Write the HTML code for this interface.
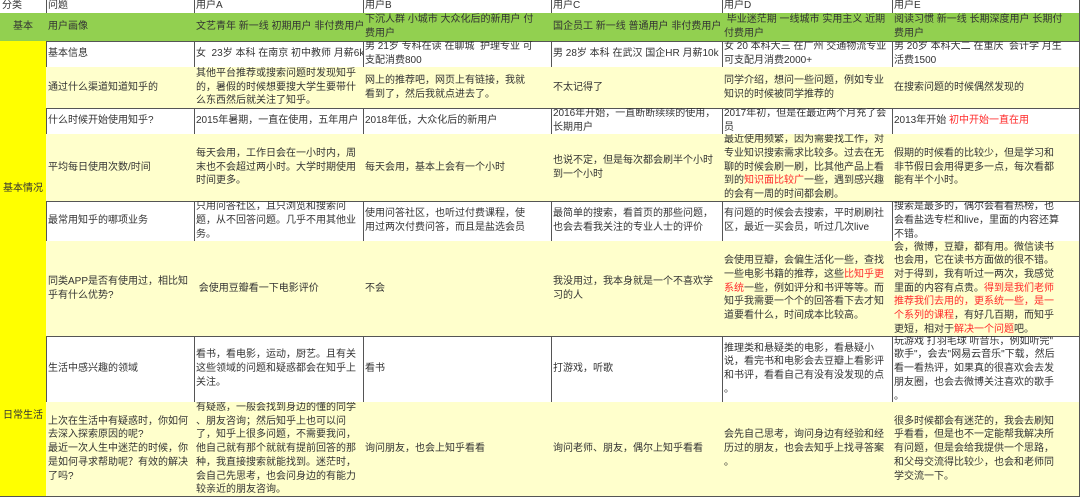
<!DOCTYPE html>
<html><head><meta charset="utf-8"><style>
*{box-sizing:border-box;margin:0;padding:0}
body{width:1080px;height:495px;overflow:hidden;background:#fff;position:relative;font-family:"Liberation Sans","Noto Sans CJK SC",sans-serif;font-size:10px;line-height:13.7px;color:#333}
.c{position:absolute;overflow:hidden;border-right:1px solid #555;border-bottom:1px solid #555;display:flex;align-items:center;padding-left:2px;white-space:nowrap}
.c>div{width:100%}
.h{align-items:flex-start;line-height:12px}
.y{background:#ffffcc}.g{background:#92d050}.Y{background:#ffff00}
.ctr{justify-content:center;text-align:center;padding:0}
.r{color:#ff2a2a}
.c0{left:0;width:47px}.c1{left:46px;width:149px}.cA{left:194px;width:170px}.cB{left:363px;width:189px}.cC{left:551px;width:172px}.cD{left:722px;width:171px}.cE{left:892px;width:188px}
.r0{top:0;height:14px}.r1{top:13px;height:29px}.r2{top:41px;height:27px}.r3{top:67px;height:42px}.r4{top:108px;height:27px}.r5{top:134px;height:68px}.r6{top:201px;height:41px}.r7{top:241px;height:96px}.r8{top:336px;height:67px}.r9{top:402px;height:95px}
</style></head><body>
<div class="c h c0 r0"><div>分类</div></div>
<div class="c h c1 r0"><div>问题</div></div>
<div class="c h cA r0"><div>用户A</div></div>
<div class="c h cB r0"><div>用户B</div></div>
<div class="c h cC r0"><div>用户C</div></div>
<div class="c h cD r0"><div>用户D</div></div>
<div class="c h cE r0"><div>用户E</div></div>

<div class="c g ctr c0 r1"><div>基本</div></div>
<div class="c g c1 r1"><div>用户画像</div></div>
<div class="c g cA r1"><div>文艺青年 新一线 初期用户 非付费用户</div></div>
<div class="c g cB r1"><div>下沉人群 小城市 大众化后的新用户 付<br>费用户</div></div>
<div class="c g cC r1"><div>国企员工 新一线 普通用户 非付费用户</div></div>
<div class="c g cD r1"><div>&nbsp;毕业迷茫期 一线城市 实用主义 近期<br>付费用户</div></div>
<div class="c g cE r1"><div>阅读习惯 新一线 长期深度用户 长期付<br>费用户</div></div>

<div class="c Y ctr c0" style="top:41px;height:296px"><div>基本情况</div></div>
<div class="c Y ctr c0" style="top:336px;height:161px"><div>日常生活</div></div>

<div class="c c1 r2"><div>基本信息</div></div>
<div class="c cA r2"><div>女&nbsp; 23岁 本科 在南京 初中教师 月薪6k</div></div>
<div class="c cB r2"><div>男 21岁 专科在读 在聊城&nbsp; 护理专业 可<br>支配消费800</div></div>
<div class="c cC r2"><div>男 28岁 本科 在武汉 国企HR 月薪10k</div></div>
<div class="c cD r2"><div>女 20 本科大三 在广州 交通物流专业<br>可支配月消费2000+</div></div>
<div class="c cE r2"><div>男 20岁 本科大二 在重庆&nbsp; 会计学 月生<br>活费1500</div></div>

<div class="c y c1 r3"><div>通过什么渠道知道知乎的</div></div>
<div class="c y cA r3"><div>其他平台推荐或搜索问题时发现知乎<br>的，暑假的时候想要搜大学生要带什<br>么东西然后就关注了知乎。</div></div>
<div class="c y cB r3"><div>网上的推荐吧，网页上有链接，我就<br>看到了，然后我就点进去了。</div></div>
<div class="c y cC r3"><div>不太记得了</div></div>
<div class="c y cD r3"><div>同学介绍，想问一些问题，例如专业<br>知识的时候被同学推荐的</div></div>
<div class="c y cE r3"><div>在搜索问题的时候偶然发现的</div></div>

<div class="c c1 r4"><div>什么时候开始使用知乎?</div></div>
<div class="c cA r4"><div>2015年暑期，一直在使用，五年用户</div></div>
<div class="c cB r4"><div>2018年低，大众化后的新用户</div></div>
<div class="c cC r4"><div>2016年开始，一直断断续续的使用，<br>长期用户</div></div>
<div class="c cD r4"><div>2017年初，但是在最近两个月充了会<br>员</div></div>
<div class="c cE r4"><div>2013年开始 <span class="r">初中开始一直在用</span></div></div>

<div class="c y c1 r5"><div>平均每日使用次数/时间</div></div>
<div class="c y cA r5"><div>每天会用，工作日会在一小时内，周<br>末也不会超过两小时。大学时期使用<br>时间更多。</div></div>
<div class="c y cB r5"><div>每天会用，基本上会有一个小时</div></div>
<div class="c y cC r5"><div>也说不定，但是每次都会刷半个小时<br>到一个小时</div></div>
<div class="c y cD r5"><div>最近使用频繁，因为需要找工作，对<br>专业知识搜索需求比较多。过去在无<br>聊的时候会刷一刷，比其他产品上看<br>到的<span class="r">知识面比较广</span>一些，遇到感兴趣<br>的会有一周的时间都会刷。</div></div>
<div class="c y cE r5"><div>假期的时候看的比较少，但是学习和<br>非节假日会用得更多一点，每次看都<br>能有半个小时。</div></div>

<div class="c c1 r6"><div>最常用知乎的哪项业务</div></div>
<div class="c cA r6"><div>只用问答社区，且只浏览和搜索问<br>题，从不回答问题。几乎不用其他业<br>务。</div></div>
<div class="c cB r6"><div>使用问答社区，也听过付费课程，使<br>用过两次付费问答，而且是盐选会员</div></div>
<div class="c cC r6"><div>最简单的搜索，看首页的那些问题，<br>也会去看我关注的专业人士的评价</div></div>
<div class="c cD r6"><div>有问题的时候会去搜索，平时刷刷社<br>区，最近一买会员，听过几次live</div></div>
<div class="c cE r6"><div>搜索是最多的，偶尔会看看热榜，也<br>会看盐选专栏和live，里面的内容还算<br>不错。</div></div>

<div class="c y c1 r7"><div>同类APP是否有使用过，相比知<br>乎有什么优势?</div></div>
<div class="c y cA r7"><div>&nbsp;会使用豆瓣看一下电影评价</div></div>
<div class="c y cB r7"><div>不会</div></div>
<div class="c y cC r7"><div>我没用过，我本身就是一个不喜欢学<br>习的人</div></div>
<div class="c y cD r7"><div>会使用豆瓣，会偏生活化一些，查找<br>一些电影书籍的推荐，这些<span class="r">比知乎更<br>系统</span>一些，例如评分和书评等等。而<br>知乎我需要一个个的回答看下去才知<br>道要看什么，时间成本比较高。</div></div>
<div class="c y cE r7"><div>会，微博，豆瓣，都有用。微信读书<br>也会用，它在读书方面做的很不错。<br>对于得到，我有听过一两次，我感觉<br>里面的内容有点贵。<span class="r">得到是我们老师<br>推荐我们去用的，更系统一些，是一<br>个系列的课程</span>，有好几百期，而知乎<br>更短，相对于<span class="r">解决一个问题</span>吧。</div></div>

<div class="c c1 r8"><div>生活中感兴趣的领域</div></div>
<div class="c cA r8"><div>看书，看电影，运动，厨艺。且有关<br>这些领域的问题和疑惑都会在知乎上<br>关注。</div></div>
<div class="c cB r8"><div>看书</div></div>
<div class="c cC r8"><div>打游戏，听歌</div></div>
<div class="c cD r8"><div>推理类和悬疑类的电影，看悬疑小<br>说，看完书和电影会去豆瓣上看影评<br>和书评，看看自己有没有没发现的点<br>。</div></div>
<div class="c cE r8"><div>玩游戏 打羽毛球 听音乐，例如听完"<br>歌手"，会去"网易云音乐"下载，然后<br>看一看热评，如果真的很喜欢会去发<br>朋友圈，也会去微博关注喜欢的歌手<br>。</div></div>

<div class="c y c1 r9"><div>上次在生活中有疑惑时，你如何<br>去深入探索原因的呢?<br>最近一次人生中迷茫的时候，你<br>是如何寻求帮助呢？有效的解决<br>了吗?</div></div>
<div class="c y cA r9"><div>有疑惑，一般会找到身边的懂的同学<br>、朋友咨询；然后知乎上也可以问<br>了，知乎上很多问题，不需要我问，<br>他自己就有那个就就有提前回答的那<br>种，我直接搜索就能找到。迷茫时，<br>会自己先思考，也会问身边的有能力<br>较亲近的朋友咨询。</div></div>
<div class="c y cB r9"><div>询问朋友，也会上知乎看看</div></div>
<div class="c y cC r9"><div>询问老师、朋友，偶尔上知乎看看</div></div>
<div class="c y cD r9"><div>会先自己思考，询问身边有经验和经<br>历过的朋友，也会去知乎上找寻答案<br>。</div></div>
<div class="c y cE r9"><div>很多时候都会有迷茫的，我会去刷知<br>乎看看，但是也不一定能帮我解决所<br>有问题，但是会给我提供一个思路，<br>和父母交流得比较少，也会和老师同<br>学交流一下。</div></div>
</body></html>
